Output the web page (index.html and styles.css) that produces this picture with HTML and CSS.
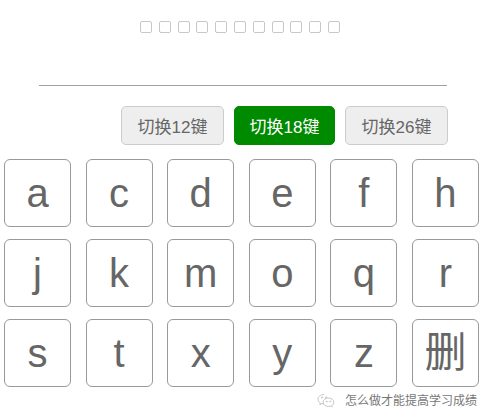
FILE: index.html
```html
<!DOCTYPE html>
<html lang="zh">
<head>
  <meta charset="UTF-8" />
  <meta name="viewport" content="width=device-width, initial-scale=1.0"/>
  <title>键盘</title>
  <link rel="stylesheet" href="styles.css">
</head>
<body>

  <!-- input display -->
  <div class="display">
    <span class="box"></span><span class="box"></span><span class="box"></span>
    <span class="box"></span><span class="box"></span><span class="box"></span>
    <span class="box"></span><span class="box"></span><span class="box"></span>
    <span class="box"></span><span class="box"></span>
  </div>
  <div class="line"></div>

  <!-- mode switch -->
  <div class="modes">
    <button class="mode">切换12键</button>
    <button class="mode active">切换18键</button>
    <button class="mode">切换26键</button>
  </div>

  <!-- keys -->
  <div class="keys">
    <button class="key">a</button>
    <button class="key">c</button>
    <button class="key">d</button>
    <button class="key">e</button>
    <button class="key">f</button>
    <button class="key">h</button>
    <button class="key">j</button>
    <button class="key">k</button>
    <button class="key">m</button>
    <button class="key">o</button>
    <button class="key">q</button>
    <button class="key">r</button>
    <button class="key">s</button>
    <button class="key">t</button>
    <button class="key">x</button>
    <button class="key">y</button>
    <button class="key">z</button>
    <button class="key del">删</button>
  </div>

  <div class="mark">
    <svg width="18" height="14" viewBox="0 0 18 14" fill="none" stroke="#c4c4c4" stroke-width="1">
      <path d="M7 1.5c-3.3 0-6 2.1-6 4.7 0 1.5.9 2.8 2.3 3.7l-.5 1.8 2.1-1.1c.7.2 1.4.3 2.1.3"/>
      <path d="M11.5 5c-3 0-5.4 1.9-5.4 4.2s2.4 4.2 5.4 4.2c.6 0 1.2-.1 1.8-.3l1.8 1-.4-1.6c1.3-.8 2.1-2 2.1-3.3 0-2.3-2.4-4.2-5.3-4.2z"/>
      <circle cx="5" cy="4.5" r=".6" fill="#c4c4c4"/>
      <circle cx="9" cy="4.5" r=".6" fill="#c4c4c4"/>
      <circle cx="9.8" cy="8.6" r=".5" fill="#c4c4c4"/>
      <circle cx="13.2" cy="8.6" r=".5" fill="#c4c4c4"/>
    </svg>
    <span>怎么做才能提高学习成绩</span>
  </div>

</body>
</html>
```

FILE: styles.css
```css
body {
  margin: 0; width: 491px; height: 419px; position: relative;
  font-family: "Liberation Sans", "Noto Sans CJK SC", sans-serif;
  background: #fff; overflow: hidden;
}
.display {
  display: flex; gap: 6.8px;
  padding: 21px 0 0 140px; height: 12px;
}
.box {
  width: 10px; height: 10px;
  border: 1px solid #c8c8c8; border-radius: 2px;
}
.line {
  margin: 52px 0 0 39px; width: 408px;
  height: 1px; background: #a0a0a0;
}
.modes {
  display: flex; justify-content: flex-end; gap: 10px;
  margin: 20px 43px 0 0;
}
.mode {
  width: 103px; height: 39px; padding: 0;
  border: 1px solid #ccc; border-radius: 5px;
  background: #eee; color: #666;
  font-family: inherit; font-size: 17px;
}
.mode.active {
  width: 101px; background: #008a00;
  border-color: #008a00; color: #fff;
}
.keys {
  display: grid; grid-template-columns: repeat(6, 67px);
  column-gap: 14.6px; row-gap: 12px;
  margin: 14px 0 0 4px;
}
.key {
  height: 68px; padding: 0;
  border: 1px solid #999; border-radius: 6px;
  background: #fff; color: #666;
  font-family: inherit; font-size: 40px; line-height: 1;
}
.key.del { font-size: 42px; }
.mark {
  position: absolute; left: 317px; top: 391px;
  display: flex; align-items: center; gap: 10px;
  font-size: 12px; color: #777;
}
```
